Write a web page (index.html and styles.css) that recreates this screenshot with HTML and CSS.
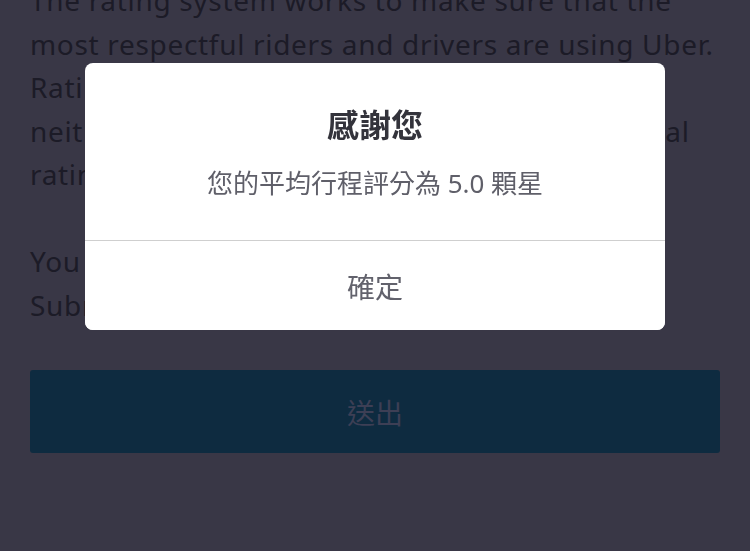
FILE: index.html
```html
<!DOCTYPE html>
<html lang="zh-Hant">
<head>
<meta charset="utf-8">
<title>評分</title>
<link rel="stylesheet" href="styles.css">
</head>
<body>
<main class="page">
  <p class="copy">The rating system works to make sure that the<br>most respectful riders and drivers are using Uber.<br>Ratings are anonymous, which means that<br>neither riders nor drivers can see any individual<br>rating or who gave it.</p>
  <p class="copy">You can change your rating before you<br>Submit.</p>
  <button class="submit" type="button">送出</button>
</main>
<div class="overlay">
  <div class="dialog">
    <div class="dialog-body">
      <h1 class="dialog-title">感謝您</h1>
      <p class="dialog-text">您的平均行程評分為 5.0 顆星</p>
    </div>
    <button class="dialog-btn" type="button">確定</button>
  </div>
</div>
</body>
</html>
```
FILE: styles.css
```css
* { box-sizing: border-box; }
html, body {
  margin: 0;
  padding: 0;
  height: 100%;
  overflow: hidden;
}
body {
  background: #393746;
  font-family: "Noto Sans", "Noto Sans CJK TC", sans-serif;
}
.page {
  padding: 0 30px;
  margin-top: -21px;
  display: flex;
  flex-direction: column;
}
.copy {
  margin: 0 0 43.5px 0;
  color: #1c1b27;
  font-size: 28px;
  line-height: 43.5px;
  letter-spacing: 0.68px;
  white-space: nowrap;
}
.copy + .copy { margin-bottom: 43px; }
.submit {
  height: 83px;
  border: none;
  border-radius: 3px;
  background: #0e2b40;
  color: #3d3f55;
  font-family: "Noto Sans CJK TC", sans-serif;
  font-size: 28px;
  padding: 0;
}
.overlay {
  position: fixed;
  inset: 0;
  display: flex;
  justify-content: center;
  align-items: flex-start;
  padding-top: 63px;
}
.dialog {
  width: 580px;
  background: #fff;
  border-radius: 8px;
  overflow: hidden;
  display: flex;
  flex-direction: column;
}
.dialog-body {
  padding: 42px 20px 39px;
  display: flex;
  flex-direction: column;
  align-items: center;
  gap: 24px;
  border-bottom: 1px solid #cfcfcf;
}
.dialog-title {
  margin: 0;
  font-family: "Noto Sans CJK TC", sans-serif;
  font-size: 32px;
  line-height: 36px;
  font-weight: 700;
  color: #33333b;
}
.dialog-text {
  margin: 0;
  font-family: "Noto Sans", "Noto Sans CJK TC", sans-serif;
  font-size: 26px;
  line-height: 36px;
  color: #5f5f69;
}
.dialog-btn {
  height: 89px;
  border: none;
  background: #fff;
  font-family: "Noto Sans CJK TC", sans-serif;
  font-size: 28px;
  color: #62626c;
  padding: 0;
}
```
